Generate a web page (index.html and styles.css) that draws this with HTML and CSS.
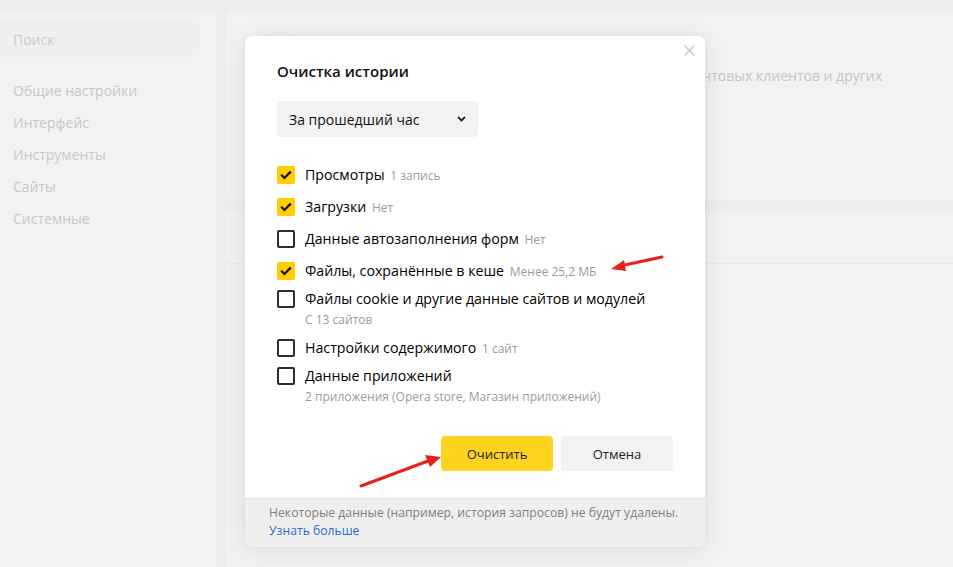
FILE: index.html
```html
<!DOCTYPE html>
<html lang="ru">
<head>
<meta charset="utf-8">
<title>Очистка истории</title>
<link rel="stylesheet" href="styles.css">
</head>
<body>
<div class="page">
  <aside class="sidebar">
    <div class="search">Поиск</div>
    <nav class="nav">
      <div class="nav-item active">Общие настройки</div>
      <div class="nav-item">Интерфейс</div>
      <div class="nav-item">Инструменты</div>
      <div class="nav-item">Сайты</div>
      <div class="nav-item">Системные</div>
    </nav>
  </aside>
  <main class="main">
    <section class="card card-top">
      <div class="avatar"></div>
      <p class="card-text">почтовых клиентов и других</p>
    </section>
    <section class="card card-second">
      <div class="card-second-head"></div>
    </section>
  </main>
</div>

<div class="modal">
  <div class="modal-body">
    <button class="close" aria-label="Закрыть">
      <svg width="11" height="11" viewBox="0 0 11 11"><path d="M0.5 0.5 L10.5 10.5 M10.5 0.5 L0.5 10.5" stroke="#c4c4c4" stroke-width="1.2" fill="none"/></svg>
    </button>
    <h2 class="title">Очистка истории</h2>
    <div class="select">
      <span>За прошедший час</span>
      <svg width="9" height="6" viewBox="0 0 9 6"><path d="M1 1 L4.5 4.5 L8 1" stroke="#222" stroke-width="1.8" fill="none"/></svg>
    </div>
    <ul class="opts">
      <li class="opt">
        <span class="box checked"><svg width="12" height="10" viewBox="0 0 12 10"><path d="M1.2 4.8 L4.4 8 L10.8 1.6" stroke="#111" stroke-width="2.2" fill="none"/></svg></span>
        <span class="label">Просмотры <span class="note">1 запись</span></span>
      </li>
      <li class="opt">
        <span class="box checked"><svg width="12" height="10" viewBox="0 0 12 10"><path d="M1.2 4.8 L4.4 8 L10.8 1.6" stroke="#111" stroke-width="2.2" fill="none"/></svg></span>
        <span class="label">Загрузки <span class="note">Нет</span></span>
      </li>
      <li class="opt">
        <span class="box"></span>
        <span class="label">Данные автозаполнения форм <span class="note">Нет</span></span>
      </li>
      <li class="opt">
        <span class="box checked"><svg width="12" height="10" viewBox="0 0 12 10"><path d="M1.2 4.8 L4.4 8 L10.8 1.6" stroke="#111" stroke-width="2.2" fill="none"/></svg></span>
        <span class="label">Файлы, сохранённые в кеше <span class="note">Менее 25,2 МБ</span></span>
      </li>
      <li class="opt tight">
        <span class="box"></span>
        <span class="label">Файлы cookie и другие данные сайтов и модулей</span>
        <span class="sub">С 13 сайтов</span>
      </li>
      <li class="opt tight">
        <span class="box"></span>
        <span class="label">Настройки содержимого <span class="note">1 сайт</span></span>
      </li>
      <li class="opt tight">
        <span class="box"></span>
        <span class="label">Данные приложений</span>
        <span class="sub">2 приложения (Opera store, Магазин приложений)</span>
      </li>
    </ul>
    <div class="actions">
      <button class="btn btn-primary">Очистить</button>
      <button class="btn">Отмена</button>
    </div>
  </div>
  <footer class="modal-foot">
    <p>Некоторые данные (например, история запросов) не будут удалены.</p>
    <a class="more" href="#">Узнать больше</a>
  </footer>
</div>

<svg class="annotations" width="953" height="567" viewBox="0 0 953 567">
  <g stroke="#e8201c" stroke-width="3" fill="none" stroke-linecap="round">
    <path d="M662 257 L620 266"/>
    <path d="M361 486 L428 461"/>
  </g>
  <g fill="#e8201c">
    <path d="M611 269 L624 260 L626 271 Z"/>
    <path d="M441 457 L425 455 L430 467 Z"/>
  </g>
</svg>
</body>
</html>
```
FILE: styles.css
```css
* { box-sizing: border-box; }

html, body {
  margin: 0;
  padding: 0;
}

body {
  width: 953px;
  height: 567px;
  overflow: hidden;
  background: #efeeed;
  font-family: "Open Sans", "Noto Sans", sans-serif;
  color: #000;
  position: relative;
}

.page {
  display: flex;
  gap: 10px;
  height: 567px;
  padding-top: 11px;
}

.sidebar {
  width: 216px;
  flex: none;
  background: #f3f2f1;
  border-top-right-radius: 8px;
  padding-top: 11px;
}

.search {
  width: 200px;
  height: 35px;
  background: #f0efee;
  border-radius: 0 6px 6px 0;
  padding-left: 13px;
  font-size: 14px;
  line-height: 35px;
  color: #cdcccb;
}

.nav {
  margin-top: 18px;
}

.nav-item {
  height: 32px;
  line-height: 32px;
  padding-left: 13px;
  font-size: 14px;
  color: #c9c8c7;
}

.main {
  flex: 1;
  display: flex;
  flex-direction: column;
  gap: 10px;
  min-width: 0;
}

.card {
  background: #f3f2f1;
  border-radius: 8px 0 0 8px;
}

.card-top {
  height: 189px;
  display: flex;
  align-items: flex-start;
  padding: 21px 71px 0 37px;
}

.avatar {
  width: 34px;
  height: 34px;
  border-radius: 50%;
  border: 1px solid #e9e8e7;
  flex: none;
}

.card-text {
  margin: 34px 0 0 auto;
  font-size: 14px;
  line-height: 20px;
  color: #c6c5c4;
  white-space: nowrap;
}

.card-second {
  flex: 1;
  border-radius: 8px 0 0 0;
}

.card-second-head {
  height: 54px;
  border-bottom: 1px solid #ebeae9;
}

/* modal */
.modal {
  position: absolute;
  left: 245px;
  top: 36px;
  width: 460px;
  height: 511px;
  background: #fff;
  border-radius: 8px;
  overflow: hidden;
  display: flex;
  flex-direction: column;
  box-shadow: 0 4px 28px rgba(0, 0, 0, 0.09), 0 0 6px rgba(0, 0, 0, 0.04);
}

.modal-body {
  flex: 1;
  position: relative;
  padding: 25px 32px 0;
}

.close {
  position: absolute;
  right: 10px;
  top: 9px;
  width: 11px;
  height: 11px;
  padding: 0;
  border: 0;
  background: none;
  display: block;
}

.close svg { display: block; }

.title {
  margin: 0;
  font-size: 15px;
  font-weight: 600;
  line-height: 20px;
  color: #111;
}

.select {
  margin-top: 20px;
  width: 201px;
  height: 36px;
  background: #f2f2f2;
  border-radius: 4px;
  display: flex;
  align-items: center;
  justify-content: space-between;
  padding: 0 12px;
  font-size: 14px;
  color: #111;
}

.opts {
  list-style: none;
  margin: 28px 0 0;
  padding: 0;
}

.opt {
  display: grid;
  grid-template-columns: 18px 1fr;
  column-gap: 10px;
  align-items: center;
}

.opt + .opt { margin-top: 12px; }
.opt + .opt.tight { margin-top: 8px; }

.box {
  width: 18px;
  height: 18px;
  border: 2px solid #2e2e2e;
  border-radius: 2px;
  display: flex;
  align-items: center;
  justify-content: center;
}

.box.checked {
  background: #ffcc00;
  border-color: #ffcc00;
}

.box svg { display: block; }

.label {
  display: block;
  height: 20px;
  font-size: 14.2px;
  line-height: 20px;
  color: #000;
  white-space: nowrap;
}

.note {
  font-size: 12px;
  line-height: 1;
  color: #9b9b9b;
  margin-left: 2px;
}

.sub {
  grid-column: 2;
  display: block;
  height: 20px;
  font-size: 12px;
  line-height: 20px;
  margin-top: 1px;
  color: #9b9b9b;
}

.actions {
  margin-top: 29px;
  display: flex;
  justify-content: flex-end;
  gap: 8px;
}

.btn {
  width: 112px;
  height: 35px;
  border: 0;
  border-radius: 4px;
  background: #f2f2f2;
  font-family: inherit;
  font-size: 13px;
  color: #222;
  padding: 0;
}

.btn-primary {
  background: #fed31f;
}

.modal-foot {
  height: 49px;
  flex: none;
  background: #efefef;
  border-top: 1px solid #e4e4e4;
  padding: 5px 24px 0;
  font-size: 12.2px;
  line-height: 18px;
  color: #808080;
}

.modal-foot p { margin: 0; }

.more {
  color: #1f6bd6;
  text-decoration: none;
}

.annotations {
  position: absolute;
  left: 0;
  top: 0;
  pointer-events: none;
}
```
